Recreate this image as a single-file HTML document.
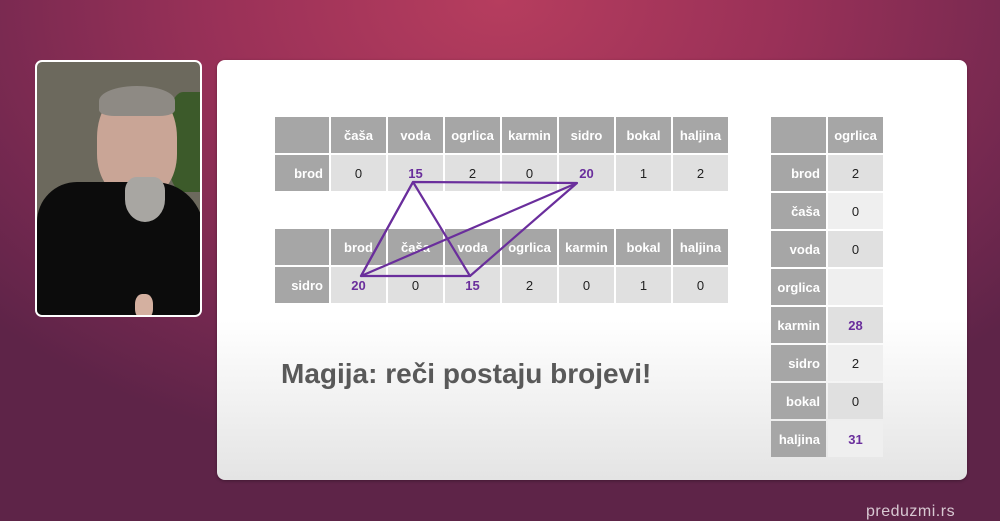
<!DOCTYPE html>
<html><head><meta charset="utf-8"><style>
*{margin:0;padding:0;box-sizing:border-box}
body{width:1000px;height:521px;overflow:hidden;position:relative;font-family:"Liberation Sans",sans-serif;
background:radial-gradient(ellipse 70% 90% at 50% 0%,#b63d5e 0%,#9a3158 40%,#72284f 80%,#5e2448 100%);}
.slide{position:absolute;left:217px;top:60px;width:750px;height:420px;border-radius:8px;
background:linear-gradient(#fff 0%,#fff 62%,#e4e4e4 100%);box-shadow:0 1px 3px rgba(0,0,0,.3)}
.cam{position:absolute;left:35px;top:60px;width:167px;height:257px;border:2px solid #fff;border-radius:7px;overflow:hidden;background:#6c695d}
.g{position:absolute;display:grid;gap:2px}
.g div{display:flex;align-items:center;justify-content:center;font-size:13px;color:#222;background:#e0e0e0}
.g div.h{background:#a6a6a6;color:#fff;font-weight:bold}
.g div.l{background:#a6a6a6;color:#fff;font-weight:bold;justify-content:flex-end;padding-right:6px}
.g div.p{color:#6a2e9c;font-weight:bold}
.t{grid-template-columns:54px repeat(7,55px);grid-auto-rows:36px}
.r{grid-template-columns:55px 55px;grid-auto-rows:36px}
.r div.a{background:#efefef}
</style></head><body>
<div class="cam">
 <div style="position:absolute;left:130px;top:30px;width:40px;height:100px;background:#3c5a2a;border-radius:40% 0 0 40%"></div>
 <div style="position:absolute;left:60px;top:26px;width:80px;height:110px;background:#c9a596;border-radius:45% 45% 40% 40%"></div>
 <div style="position:absolute;left:62px;top:24px;width:76px;height:30px;background:#8e8a84;border-radius:50% 50% 20% 20%"></div>
 <div style="position:absolute;left:88px;top:115px;width:40px;height:45px;background:#a8a6a2;border-radius:30% 30% 50% 50%"></div>
 <div style="position:absolute;left:0;top:120px;width:167px;height:140px;background:#0c0c0c;border-radius:40px 50px 0 0"></div>
 <div style="position:absolute;left:88px;top:115px;width:40px;height:45px;background:#a8a6a2;border-radius:30% 30% 50% 50%"></div>
 <div style="position:absolute;left:98px;top:232px;width:18px;height:25px;background:#d4b0a0;border-radius:40%"></div>
</div>
<div class="slide"></div>
<div class="g t" style="left:275px;top:117px">
 <div class="h"></div><div class="h">čaša</div><div class="h">voda</div><div class="h">ogrlica</div><div class="h">karmin</div><div class="h">sidro</div><div class="h">bokal</div><div class="h">haljina</div>
 <div class="l">brod</div><div>0</div><div class="p">15</div><div>2</div><div>0</div><div class="p">20</div><div>1</div><div>2</div>
</div>
<div class="g t" style="left:275px;top:229px">
 <div class="h"></div><div class="h">brod</div><div class="h">čaša</div><div class="h">voda</div><div class="h">ogrlica</div><div class="h">karmin</div><div class="h">bokal</div><div class="h">haljina</div>
 <div class="l">sidro</div><div class="p">20</div><div>0</div><div class="p">15</div><div>2</div><div>0</div><div>1</div><div>0</div>
</div>
<svg style="position:absolute;left:0;top:0" width="1000" height="521"><g stroke="#6a2e9c" stroke-width="2.2" fill="none" stroke-linejoin="round">
<polygon points="413,182 577,183 361,276"/><polygon points="413,182 470,276 361,276"/><line x1="577" y1="183" x2="470" y2="276"/></g></svg>
<div class="g r" style="left:771px;top:117px">
 <div class="h"></div><div class="h">ogrlica</div>
 <div class="l">brod</div><div>2</div>
 <div class="l">čaša</div><div class="a">0</div>
 <div class="l">voda</div><div>0</div>
 <div class="l">orglica</div><div class="a"></div>
 <div class="l">karmin</div><div class="p">28</div>
 <div class="l">sidro</div><div class="a">2</div>
 <div class="l">bokal</div><div>0</div>
 <div class="l">haljina</div><div class="p a">31</div>
</div>
<div style="position:absolute;left:281px;top:358px;font-size:28px;font-weight:bold;color:#595959">Magija: reči postaju brojevi!</div>
<div style="position:absolute;left:866px;top:503px;font-size:16px;color:#d8c8d2;letter-spacing:0.5px">preduzmi.rs</div>
</body></html>
